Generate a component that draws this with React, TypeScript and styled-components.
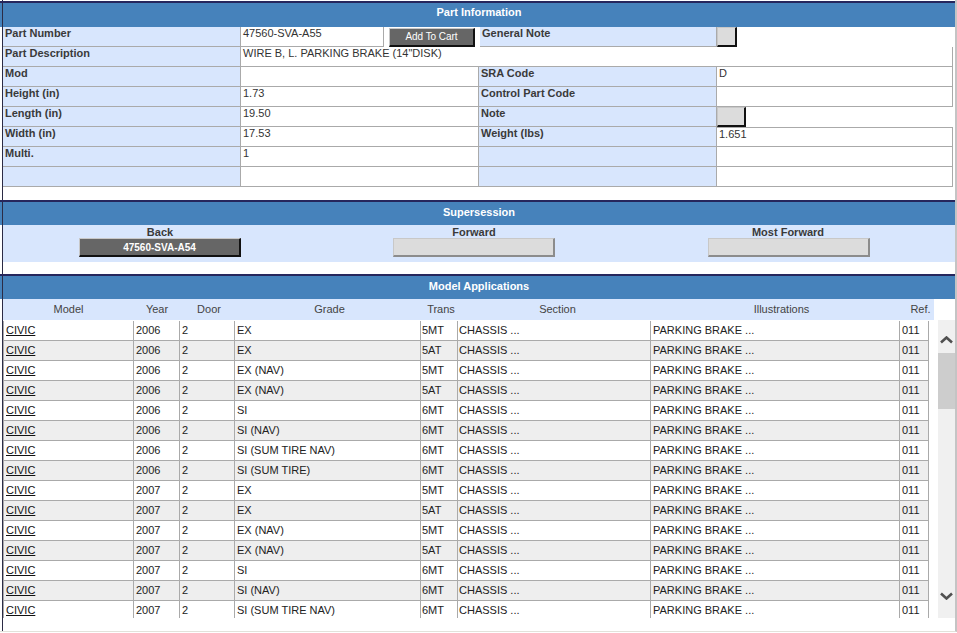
import React from "react";
import styled, { createGlobalStyle } from "styled-components";

const Global = createGlobalStyle`
  html, body { margin: 0; padding: 0; background: #fff; overflow: hidden; }
  body { font-family: "Liberation Sans", Arial, sans-serif; font-size: 11px; line-height: 13px; color: #333; }
  * { box-sizing: border-box; }
`;

const RULE = "#2b2b45";
const BLUE = "#4682bb";
const LIGHT = "#d8e6fd";
const LINE = "#aaaaaa";

const Frame = styled.div`
  width: 957px;
  height: 632px;
  padding-top: 1px;
  border-right: 2px solid #c4c4c4;
  border-bottom: 1px solid #e2e2da;
  background: linear-gradient(${RULE}, ${RULE}) 2px 0 / 1px 100% no-repeat, #fff;
  overflow: hidden;
`;

const Title = styled.div<{ $h: number; $pad: number }>`
  height: ${(p) => p.$h}px;
  padding: ${(p) => p.$pad}px 0 0 3px;
  border-top: 2px solid #26265c;
  background: linear-gradient(${RULE}, ${RULE}) 2px 0 / 1px 100% no-repeat, ${BLUE};
  color: #fff;
  font-weight: bold;
  text-align: center;
`;

const InfoGrid = styled.div`
  margin-left: 3px;
  width: 950px;
  height: 173px;
`;

const InfoRow = styled.div`
  display: flex;
  height: 20px;
`;

const Label = styled.div<{ $w: number }>`
  width: ${(p) => p.$w}px;
  padding-left: 2px;
  background: ${LIGHT};
  border-right: 1px solid ${LINE};
  border-bottom: 1px solid ${LINE};
  font-weight: bold;
  color: #3a3a3a;
`;

const Value = styled.div<{ $w: number; $boxed?: boolean }>`
  width: ${(p) => p.$w}px;
  padding-left: 2px;
  background: #fff;
  border-right: 1px solid ${LINE};
  border-bottom: 1px solid ${LINE};
  border-top: ${(p) => (p.$boxed ? `1px solid ${LINE}` : "none")};
  color: #333;
`;

const CartCell = styled.div`
  width: 96px;
  padding: 1px 0 0 5px;
`;

const Btn = styled.button<{ $w: number; $h: number; $dark?: boolean }>`
  display: block;
  width: ${(p) => p.$w}px;
  height: ${(p) => p.$h}px;
  padding: 0;
  background: ${(p) => (p.$dark ? "#666666" : "#dcdcdc")};
  border-style: solid;
  border-width: 1px 2px 2px 1px;
  border-color: #c8c8c8 ${(p) => (p.$dark ? "#111" : "#8c8c8c")} ${(p) => (p.$dark ? "#111" : "#8c8c8c")} #c8c8c8;
  color: #fff;
  font-family: "Liberation Sans", Arial, sans-serif;
  font-size: 10px;
`;

const CartBtn = styled(Btn)`
  padding-bottom: 2px;
  letter-spacing: -0.05px;
`;

const NoteBtn = styled(Btn)`
  border-color: #c8c8c8 #111 #111 #c8c8c8;
`;

const BoldBtn = styled(Btn)`
  font-weight: bold;
`;

const NudgedBtn = styled(Btn)`
  margin-left: 2px;
`;

const Super = styled.div`
  margin-left: 3px;
  height: 37px;
  background: ${LIGHT};
  display: grid;
  grid-template-columns: repeat(3, 314px);
  margin-bottom: 12px;
`;

const SuperCol = styled.div`
  display: flex;
  flex-direction: column;
  align-items: center;
`;

const SuperLabel = styled.div`
  height: 13px;
  padding-top: 1px;
  font-weight: bold;
  color: #3a3a3a;
`;

const COLS = "130px 46px 55px 186px 37px 193px 249px 29px";

const HeadRow = styled.div`
  margin-left: 3px;
  width: 931px;
  height: 21px;
  padding-top: 4px;
  background: ${LIGHT};
  display: grid;
  grid-template-columns: 131px 46px 55px 186px 37px 193px 249px 34px;
  color: #444;
`;

const HeadCell = styled.div<{ $shift?: number }>`
  text-align: center;
  padding-left: ${(p) => p.$shift ?? 0}px;
  white-space: nowrap;
`;

const Body = styled.div`
  margin-left: 3px;
  display: flex;
  height: 298px;
`;

const Viewport = styled.div`
  width: 935px;
  height: 298px;
  overflow: hidden;
  padding-top: 1px;
`;

const DataRow = styled.div<{ $alt: boolean }>`
  display: grid;
  grid-template-columns: ${COLS};
  width: 926px;
  height: 20px;
  background: ${(p) => (p.$alt ? "#eeeeee" : "#ffffff")};
  border-left: 1px solid ${LINE};
`;

const Cell = styled.div<{ $tight?: boolean }>`
  padding: 3px 0 0 ${(p) => (p.$tight ? 1 : 2)}px;
  border-right: 1px solid ${LINE};
  border-bottom: 1px solid ${LINE};
  color: #222;
  white-space: nowrap;
  overflow: hidden;
`;

const ModelLink = styled.a`
  color: #111;
  text-decoration: underline;
`;

const Track = styled.div`
  width: 17px;
  height: 298px;
  background: #f0f0f0;
  display: flex;
  flex-direction: column;
  justify-content: space-between;
`;

const TrackTop = styled.div`
  display: flex;
  flex-direction: column;
`;

const Arrow = styled.div<{ $up?: boolean }>`
  height: 33px;
  display: flex;
  justify-content: center;
  align-items: ${(p) => (p.$up ? "flex-end" : "flex-start")};
  padding: ${(p) => (p.$up ? "0 0 9px" : "7px 0 0")};
`;

const Thumb = styled.div`
  height: 56px;
  background: #cdcdcd;
`;

const Chevron = ({ down }: { down?: boolean }) => (
  <svg width="13" height="8" viewBox="0 0 13 8">
    <path
      d={down ? "M1 1.5 L6.5 6.5 L12 1.5" : "M1 6.5 L6.5 1.5 L12 6.5"}
      fill="none"
      stroke="#505050"
      strokeWidth="2.6"
    />
  </svg>
);

const rows: [string, string, string][] = [
  ["2006", "EX", "5MT"],
  ["2006", "EX", "5AT"],
  ["2006", "EX (NAV)", "5MT"],
  ["2006", "EX (NAV)", "5AT"],
  ["2006", "SI", "6MT"],
  ["2006", "SI (NAV)", "6MT"],
  ["2006", "SI (SUM TIRE NAV)", "6MT"],
  ["2006", "SI (SUM TIRE)", "6MT"],
  ["2007", "EX", "5MT"],
  ["2007", "EX", "5AT"],
  ["2007", "EX (NAV)", "5MT"],
  ["2007", "EX (NAV)", "5AT"],
  ["2007", "SI", "6MT"],
  ["2007", "SI (NAV)", "6MT"],
  ["2007", "SI (SUM TIRE NAV)", "6MT"],
];

export default function App() {
  return (
    <Frame>
      <Global />
      <Title $h={26} $pad={3}>Part Information</Title>
      <InfoGrid>
        <InfoRow>
          <Label $w={238}>Part Number</Label>
          <Value $w={143}>47560-SVA-A55</Value>
          <CartCell>
            <CartBtn $w={86} $h={19} $dark>Add To Cart</CartBtn>
          </CartCell>
          <Label $w={237}>General Note</Label>
          <NoteBtn $w={20} $h={20} />
        </InfoRow>
        <InfoRow>
          <Label $w={238}>Part Description</Label>
          <Value $w={712}>WIRE B, L. PARKING BRAKE (14"DISK)</Value>
        </InfoRow>
        <InfoRow>
          <Label $w={238}>Mod</Label>
          <Value $w={238} />
          <Label $w={238}>SRA Code</Label>
          <Value $w={236}>D</Value>
        </InfoRow>
        <InfoRow>
          <Label $w={238}>Height (in)</Label>
          <Value $w={238}>1.73</Value>
          <Label $w={238}>Control Part Code</Label>
          <Value $w={236} />
        </InfoRow>
        <InfoRow>
          <Label $w={238}>Length (in)</Label>
          <Value $w={238}>19.50</Value>
          <Label $w={238}>Note</Label>
          <NoteBtn $w={29} $h={20} />
        </InfoRow>
        <InfoRow>
          <Label $w={238}>Width (in)</Label>
          <Value $w={238}>17.53</Value>
          <Label $w={238}>Weight (lbs)</Label>
          <Value $w={236} $boxed>1.651</Value>
        </InfoRow>
        <InfoRow>
          <Label $w={238}>Multi.</Label>
          <Value $w={238}>1</Value>
          <Label $w={238} />
          <Value $w={236} />
        </InfoRow>
        <InfoRow>
          <Label $w={238} />
          <Value $w={238} />
          <Label $w={238} />
          <Value $w={236} />
        </InfoRow>
      </InfoGrid>

      <Title $h={25} $pad={4}>Supersession</Title>
      <Super>
        <SuperCol>
          <SuperLabel>Back</SuperLabel>
          <BoldBtn $w={162} $h={19} $dark>47560-SVA-A54</BoldBtn>
        </SuperCol>
        <SuperCol>
          <SuperLabel>Forward</SuperLabel>
          <Btn $w={162} $h={19} />
        </SuperCol>
        <SuperCol>
          <SuperLabel>Most Forward</SuperLabel>
          <NudgedBtn $w={162} $h={19} />
        </SuperCol>
      </Super>

      <Title $h={25} $pad={4}>Model Applications</Title>
      <HeadRow>
        <HeadCell>Model</HeadCell>
        <HeadCell>Year</HeadCell>
        <HeadCell $shift={3}>Door</HeadCell>
        <HeadCell $shift={3}>Grade</HeadCell>
        <HeadCell $shift={3}>Trans</HeadCell>
        <HeadCell $shift={6}>Section</HeadCell>
        <HeadCell $shift={12}>Illustrations</HeadCell>
        <HeadCell $shift={7}>Ref.</HeadCell>
      </HeadRow>
      <Body>
        <Viewport>
          {rows.map((r, i) => (
            <DataRow key={i} $alt={i % 2 === 1}>
              <Cell><ModelLink>CIVIC</ModelLink></Cell>
              <Cell>{r[0]}</Cell>
              <Cell>2</Cell>
              <Cell>{r[1]}</Cell>
              <Cell $tight>{r[2]}</Cell>
              <Cell $tight>CHASSIS ...</Cell>
              <Cell>PARKING BRAKE ...</Cell>
              <Cell>011</Cell>
            </DataRow>
          ))}
        </Viewport>
        <Track>
          <TrackTop>
            <Arrow $up><Chevron /></Arrow>
            <Thumb />
          </TrackTop>
          <Arrow><Chevron down /></Arrow>
        </Track>
      </Body>
    </Frame>
  );
}
